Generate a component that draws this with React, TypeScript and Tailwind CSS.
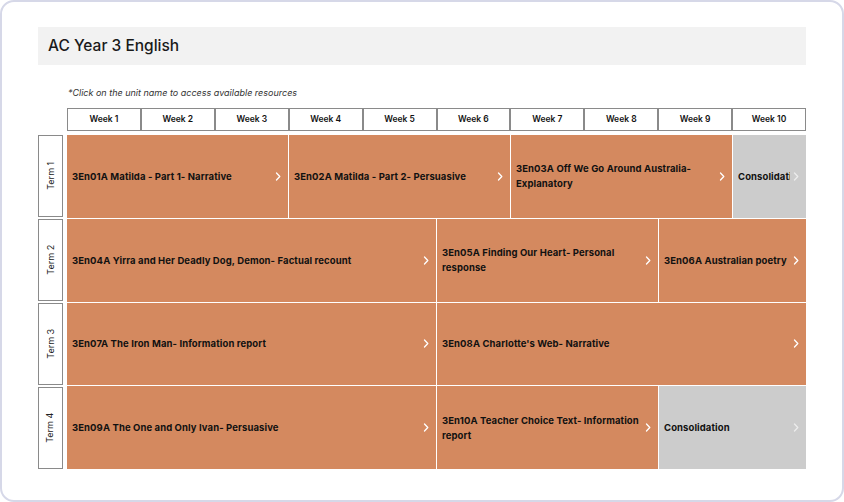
import React from "react";

type Cell = { text: string; span: number; gray?: boolean; clip?: boolean };

const rows: { term: string; cells: Cell[] }[] = [
  {
    term: "Term 1",
    cells: [
      { text: "3En01A Matilda - Part 1- Narrative", span: 3 },
      { text: "3En02A Matilda - Part 2- Persuasive", span: 3 },
      { text: "3En03A Off We Go Around Australia- Explanatory", span: 3 },
      { text: "Consolidation", span: 1, gray: true, clip: true },
    ],
  },
  {
    term: "Term 2",
    cells: [
      { text: "3En04A Yirra and Her Deadly Dog, Demon- Factual recount", span: 5 },
      { text: "3En05A Finding Our Heart- Personal response", span: 3 },
      { text: "3En06A Australian poetry", span: 2 },
    ],
  },
  {
    term: "Term 3",
    cells: [
      { text: "3En07A The Iron Man- Information report", span: 5 },
      { text: "3En08A Charlotte's Web- Narrative", span: 5 },
    ],
  },
  {
    term: "Term 4",
    cells: [
      { text: "3En09A The One and Only Ivan- Persuasive", span: 5 },
      { text: "3En10A Teacher Choice Text- Information report", span: 3 },
      { text: "Consolidation", span: 2, gray: true },
    ],
  },
];

const spanClass: Record<number, string> = {
  1: "col-span-1",
  2: "col-span-2",
  3: "col-span-3",
  5: "col-span-5",
};

const Chevron = ({ gray }: { gray?: boolean }) => (
  <svg
    width="6"
    height="9"
    viewBox="0 0 6 9"
    className="shrink-0"
    fill="none"
    stroke={gray ? "#ececec" : "#ffffff"}
    strokeWidth="1.3"
    strokeLinecap="round"
    strokeLinejoin="round"
  >
    <path d="M1.5 1 L4.8 4.5 L1.5 8" />
  </svg>
);

export default function App() {
  return (
    <div
      className="w-[844px] h-[502px] bg-white"
      style={{ fontFamily: "Inter, 'Noto Sans', sans-serif" }}
    >
      <div className="w-full h-full rounded-[14px] border-2 border-[#d6d8e8] pt-[25px] pl-[36px] pr-[36px]">
        <div className="h-[38px] bg-[#f2f2f2] flex items-center pl-[10px] text-[15.5px] text-[#1a1a1a] font-medium">
          AC Year 3 English
        </div>
        <div className="pl-[30px] mt-[22px] h-[12px] text-[9px] italic text-[#333] leading-[12px]">
          *Click on the unit name to access available resources
        </div>
        <div className="ml-[29px] mt-[9px] grid grid-cols-10 h-[23px]">
          {Array.from({ length: 10 }).map((_, i) => (
            <div
              key={i}
              className="border border-[#8a8a8a] flex items-center justify-center text-[8.5px] font-semibold text-[#111]"
            >
              Week {i + 1}
            </div>
          ))}
        </div>
        <div className="mt-[3px] flex h-[335px]">
          <div className="w-[25px] mr-[4px] flex flex-col gap-[2px] pt-[1px]">
            {rows.map((r) => (
              <div
                key={r.term}
                className="flex-1 border border-[#8a8a8a] flex items-center justify-center bg-white"
              >
                <span className="-rotate-90 whitespace-nowrap text-[9px] text-[#222]">
                  {r.term}
                </span>
              </div>
            ))}
          </div>
          <div className="flex-1 grid grid-cols-10 grid-rows-4 gap-px bg-white pt-px">
            {rows.map((r) =>
              r.cells.map((c, j) => (
                <div
                  key={r.term + j}
                  className={`${spanClass[c.span]} ${
                    c.gray ? "bg-[#cccccc]" : "bg-[#d4895f]"
                  } flex items-center pl-[5px] pr-[7px] gap-[3px]`}
                >
                  <div
                    className={`flex-1 min-w-0 text-[9.5px] font-bold tracking-[0.1px] leading-[15px] text-[#111] ${
                      c.clip ? "whitespace-nowrap overflow-hidden" : ""
                    }`}
                  >
                    {c.text}
                  </div>
                  <Chevron gray={c.gray} />
                </div>
              ))
            )}
          </div>
        </div>
      </div>
    </div>
  );
}
